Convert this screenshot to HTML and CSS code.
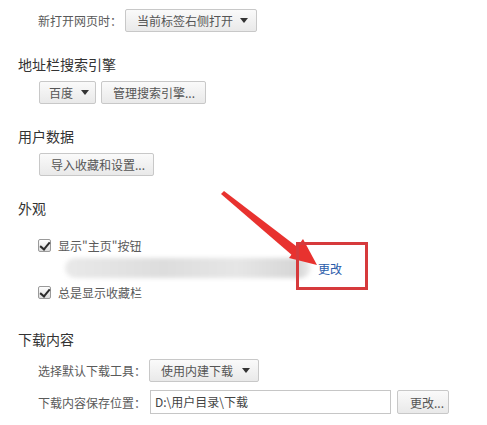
FILE: index.html
```html
<!doctype html>
<html lang="zh-CN">
<head>
    <meta charset="UTF-8">
    <title>设置</title>
    <link rel="stylesheet" href="styles.css">
</head>
<body>
<div class="page">
    <div class="row field first">
        <span class="label">新打开网页时：</span>
        <span class="btn select w130">当前标签右侧打开<i class="caret"></i></span>
    </div>

    <h3>地址栏搜索引擎</h3>
    <div class="row buttons">
        <span class="btn select w55">百度<i class="caret"></i></span>
        <span class="btn w105">管理搜索引擎...</span>
    </div>

    <h3>用户数据</h3>
    <div class="row buttons">
        <span class="btn w115">导入收藏和设置...</span>
    </div>

    <h3 class="look">外观</h3>
    <div class="row check first-check">
        <span class="box"></span>
        <span class="text">显示"主页"按钮</span>
    </div>
    <div class="row homepage">
        <span class="smudge"></span>
        <a class="link" href="#">更改</a>
    </div>
    <div class="row check">
        <span class="box"></span>
        <span class="text">总是显示收藏栏</span>
    </div>

    <h3 class="download">下载内容</h3>
    <div class="row field dl-tool">
        <span class="label">选择默认下载工具：</span>
        <span class="btn select w110">使用内建下载<i class="caret"></i></span>
    </div>
    <div class="row field dl-path">
        <span class="label">下载内容保存位置：</span>
        <span class="input">D:\用户目录\下载</span>
        <span class="btn w52">更改...</span>
    </div>
</div>

<!-- 标注：箭头和红框 -->
<svg class="arrow" width="487" height="425" viewBox="0 0 487 425">
    <polygon points="221,194 224,191 300,249 293,256" fill="#e8322f"/>
    <polygon points="317,265 289,258 303,239" fill="#e8322f"/>
</svg>
<div class="mark"></div>
</body>
</html>
```

FILE: styles.css
```css
* {
    margin: 0;
    padding: 0;
    box-sizing: border-box;
}

body {
    background: #fff;
    font-family: "Noto Sans CJK SC", "Microsoft YaHei", sans-serif;
    font-size: 12px;
    color: #5a5a5a;
    position: relative;
    width: 487px;
    height: 425px;
    overflow: hidden;
}

.page {
    padding: 9px 0 0 18px;
}

h3 {
    font-size: 14px;
    font-weight: normal;
    line-height: 20px;
    color: #333;
    margin-top: 22px;
}

h3.look {
    margin-top: 22px;
}

h3.download {
    margin-top: 27px;
}

.row {
    display: flex;
    align-items: center;
    padding-left: 20px;
}

.buttons {
    margin-top: 7px;
    gap: 5px;
    padding-left: 21px;
}

.label {
    line-height: 23px;
    margin-right: 3px;
}

.btn {
    display: inline-flex;
    align-items: center;
    height: 23px;
    padding: 0 10px 0 11px;
    border: 1px solid #c8c8c8;
    border-radius: 2px;
    background: linear-gradient(#fafafa, #e9e9e9);
    color: #555;
    white-space: nowrap;
    flex-shrink: 0;
}

.select {
    justify-content: space-between;
    padding-right: 8px;
}

.w130 { width: 132px; }
.w55 { width: 57px; padding: 0 6px 0 9px; }
.w105 { width: 105px; }
.w115 { width: 115px; }
.w110 { width: 110px; }
.w52 { width: 52px; }

.caret {
    width: 0;
    height: 0;
    border-left: 4px solid transparent;
    border-right: 4px solid transparent;
    border-top: 5px solid #333;
}

.check {
    height: 20px;
    margin-top: 4px;
}

.first-check {
    margin-top: 17px;
}

.box {
    width: 13px;
    height: 13px;
    border: 1px solid #9a9a9a;
    border-radius: 2px;
    background: linear-gradient(#fdfdfd, #dcdcdc);
    position: relative;
    margin-right: 7px;
}

.box::after {
    content: "";
    position: absolute;
    left: 3px;
    top: 0;
    width: 4px;
    height: 8px;
    border-right: 2px solid #2b2b2b;
    border-bottom: 2px solid #2b2b2b;
    transform: rotate(40deg);
}

.homepage {
    height: 20px;
    margin-top: 3px;
    padding-left: 47px;
}

.smudge {
    width: 246px;
    height: 20px;
    border-radius: 10px;
    background: linear-gradient(90deg, #e9e9e9, #dddddd 40%, #e6e6e6 70%, #d6d6d6 95%, #efefef);
    filter: blur(2px);
    margin-right: 7px;
}

.link {
    color: #2a5caa;
    text-decoration: none;
    font-size: 12px;
}

.dl-tool {
    margin-top: 10px;
}

.dl-path {
    margin-top: 8px;
}

.dl-path .label {
    margin-right: 4px;
}

.input {
    width: 241px;
    height: 24px;
    line-height: 22px;
    padding-left: 4px;
    border: 1px solid #c6c6c6;
    color: #444;
    margin-right: 6px;
}

.dl-path .btn {
    height: 24px;
    padding-left: 12px;
}

.arrow {
    position: absolute;
    left: 0;
    top: 0;
}

.mark {
    position: absolute;
    left: 296px;
    top: 242px;
    width: 72px;
    height: 48px;
    border: 3px solid #d63a3c;
}
```
